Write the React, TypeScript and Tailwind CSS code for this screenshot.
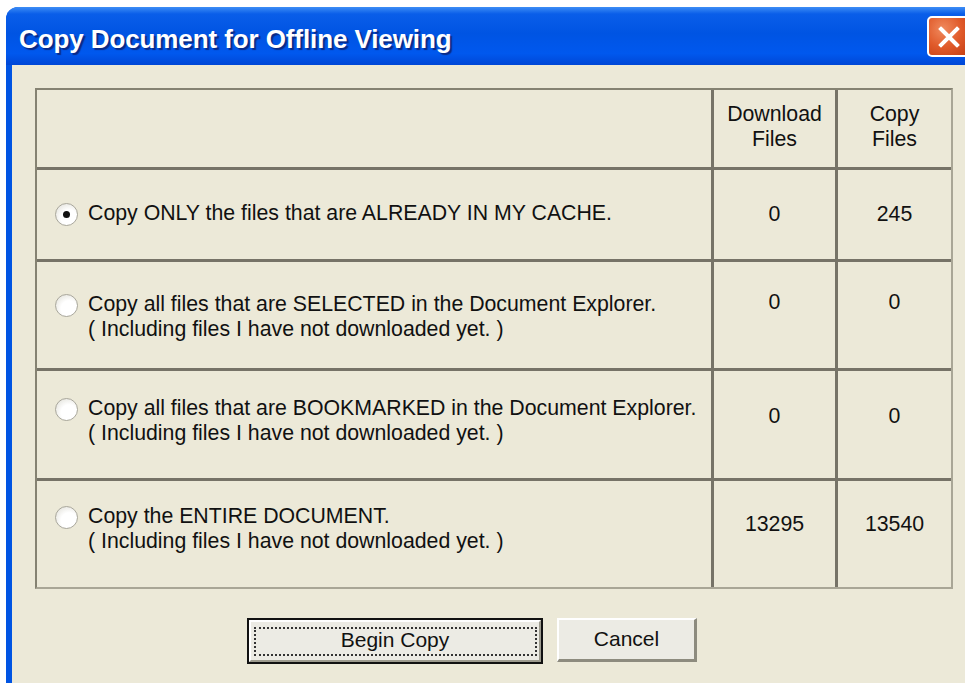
const rows = [
  {
    lines: ["Copy ONLY the files that are ALREADY IN MY CACHE."],
    download: "0",
    copy: "245",
    checked: true,
    h: "h-[89px]",
    textTop: "pt-[32px]",
    numTop: "pt-[32px]",
  },
  {
    lines: [
      "Copy all files that are SELECTED in the Document Explorer.",
      "( Including files I have not downloaded yet. )",
    ],
    download: "0",
    copy: "0",
    checked: false,
    h: "h-[106px]",
    textTop: "pt-[31px]",
    numTop: "pt-[28px]",
  },
  {
    lines: [
      "Copy all files that are BOOKMARKED in the Document Explorer.",
      "( Including files I have not downloaded yet. )",
    ],
    download: "0",
    copy: "0",
    checked: false,
    h: "h-[107px]",
    textTop: "pt-[26px]",
    numTop: "pt-[33px]",
  },
  {
    lines: [
      "Copy the ENTIRE DOCUMENT.",
      "( Including files I have not downloaded yet. )",
    ],
    download: "13295",
    copy: "13540",
    checked: false,
    h: "h-[106px]",
    textTop: "pt-[24px]",
    numTop: "pt-[31px]",
  },
];

function Radio({ checked }: { checked: boolean }) {
  return (
    <span className="relative mt-[1px] flex h-[23px] w-[23px] shrink-0 items-center justify-center rounded-full border border-[#a9a79c] bg-[radial-gradient(circle_at_62%_65%,#ffffff_42%,#dcdbd2_100%)]">
      {checked && <span className="h-[7px] w-[7px] rounded-full bg-[#111]" />}
    </span>
  );
}

function XpButton({ label, isDefault }: { label: string; isDefault?: boolean }) {
  if (isDefault) {
    return (
      <button className="h-[46px] w-[296px] border-2 border-[#111] bg-[#ecebe4] p-0">
        <span className="flex h-full w-full items-center justify-center border-t-2 border-l-2 border-b-2 border-r-2 border-t-white border-l-white border-b-[#9d9b8e] border-r-[#9d9b8e]">
          <span className="flex h-[29px] w-[283px] items-center justify-center border-2 border-dotted border-[#333] pb-[3px] text-[21px] leading-none">
            {label}
          </span>
        </span>
      </button>
    );
  }
  return (
    <button className="flex h-[44px] w-[140px] items-center justify-center border-t-2 border-l-2 border-b-[3px] border-r-[3px] border-t-white border-l-white border-b-[#8d8b7e] border-r-[#8d8b7e] bg-[#ecebe4] pb-[3px] text-[21px] leading-none">
      {label}
    </button>
  );
}

export default function App() {
  return (
    <div className="h-[683px] w-[965px] overflow-hidden bg-white pt-[7px] font-['Liberation_Sans',Arial,sans-serif] text-[#111]">
      <div className="ml-[6px] flex h-[676px] flex-col overflow-hidden rounded-tl-[12px] bg-[#0054e3]">
        {/* title bar */}
        <div className="flex h-[58px] shrink-0 items-center justify-between bg-[linear-gradient(to_bottom,#3d8df5_0%,#0a5ee9_12%,#0054e3_45%,#0058ee_80%,#0047d6_100%)] pl-[13px] pt-[6px]">
          <span className="text-[26px] font-bold tracking-[-0.1px] text-white [text-shadow:2px_2px_1px_#0a2a86]">
            Copy Document for Offline Viewing
          </span>
          <span className="-mr-[6px] mb-[5px] flex h-[41px] w-[44px] items-center justify-center rounded-[5px] border-2 border-white bg-[radial-gradient(circle_at_35%_30%,#f08a5e_0%,#e05a2a_50%,#c23c12_100%)]">
            <svg width="26" height="26" viewBox="0 0 26 26">
              <path d="M5 5 L21 21 M21 5 L5 21" stroke="#fff" strokeWidth="4" strokeLinecap="square" />
            </svg>
          </span>
        </div>

        {/* client area */}
        <div className="ml-[6px] flex-1 bg-[#ece9d8] pl-[23px] pt-[23px]">
          <div className="w-[918px] border-t-2 border-l-2 border-r-2 border-b-2 border-t-[#858272] border-l-[#858272] border-r-[#a9a696] border-b-[#a9a696] text-[21.3px] leading-[25px]">
            <div className="grid h-[77px] grid-cols-[674px_3px_121px_3px_1fr]">
              <div />
              <div className="bg-[#767367]" />
              <div className="pt-[12px] text-center">
                Download
                <br />
                Files
              </div>
              <div className="bg-[#767367]" />
              <div className="pt-[12px] text-center">
                Copy
                <br />
                Files
              </div>
            </div>
            {rows.map((r) => (
              <div key={r.lines[0]}>
                <div className="h-[3px] bg-[#767367]" />
                <div className={`grid ${r.h} grid-cols-[674px_3px_121px_3px_1fr]`}>
                  <div className={`flex items-start gap-[10px] pl-[18px] ${r.textTop}`}>
                    <Radio checked={r.checked} />
                    <div className="-mt-[1px]">
                      {r.lines.map((l) => (
                        <div key={l}>{l}</div>
                      ))}
                    </div>
                  </div>
                  <div className="bg-[#767367]" />
                  <div className={`text-center ${r.numTop}`}>{r.download}</div>
                  <div className="bg-[#767367]" />
                  <div className={`text-center ${r.numTop}`}>{r.copy}</div>
                </div>
              </div>
            ))}
          </div>

          <div className="mt-[29px] flex gap-[14px] pl-[212px]">
            <XpButton label="Begin Copy" isDefault />
            <XpButton label="Cancel" />
          </div>
        </div>
      </div>
    </div>
  );
}
